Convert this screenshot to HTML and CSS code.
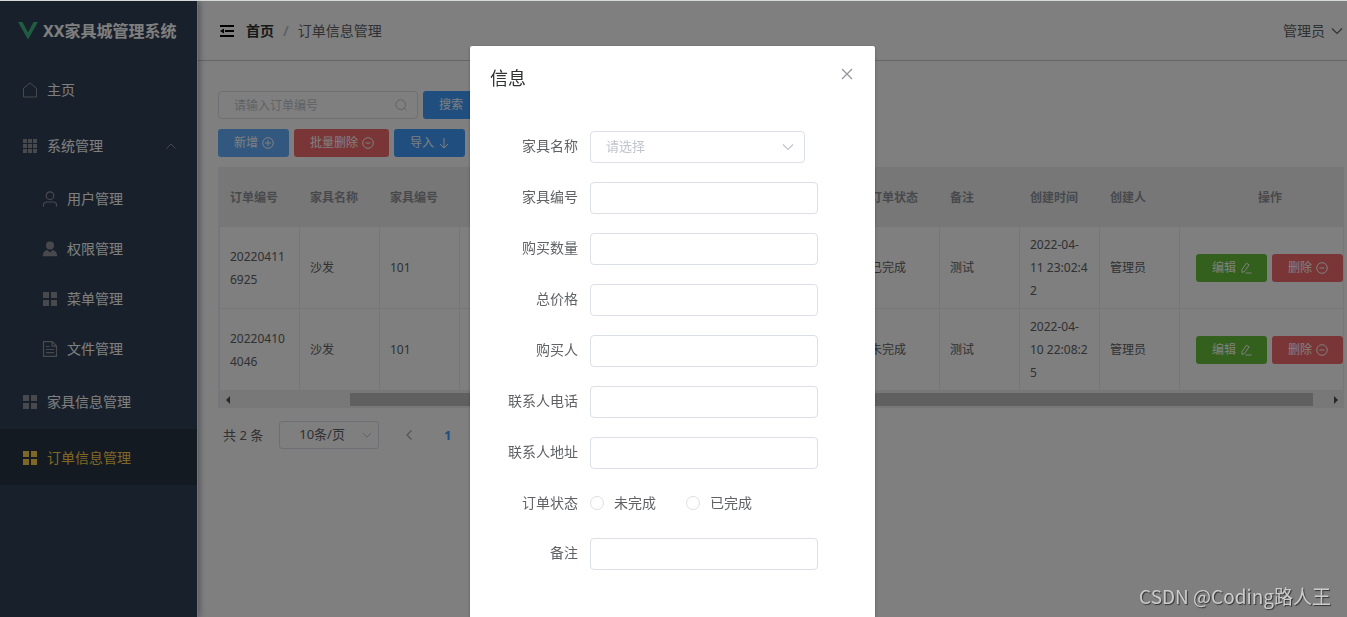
FILE: index.html
```html
<!DOCTYPE html>
<html lang="zh-CN">
<head>
<meta charset="utf-8">
<title>XX家具城管理系统</title>
<link rel="stylesheet" href="styles.css">
</head>
<body>
<svg class="sprite" aria-hidden="true">
  <symbol id="i-house" viewBox="0 0 16 16"><path d="M1.500 15V6.300L8 .9l6.500 5.400V15z" fill="none" stroke="currentColor"/></symbol>
  <symbol id="i-nine" viewBox="0 0 16 16"><path d="M1 1h4v4H1zM6 1h4v4H6zM11 1h4v4h-4zM1 6h4v4H1zM6 6h4v4H6zM11 6h4v4h-4zM1 11h4v4H1zM6 11h4v4H6zM11 11h4v4h-4z" fill="currentColor"/></symbol>
  <symbol id="i-menu" viewBox="0 0 16 16"><path d="M1 1h6v6H1zM9 1h6v6H9zM1 9h6v6H1zM9 9h6v6H9z" fill="currentColor"/></symbol>
  <symbol id="i-user" viewBox="0 0 16 16"><g fill="none" stroke="currentColor" stroke-width="1.200"><circle cx="8" cy="4.700" r="3.800"/><path d="M1.500 15.500v-1.500c0-2 1.500-3 3.500-3h6c2 0 3.500 1 3.500 3v1.500"/></g></symbol>
  <symbol id="i-user-solid" viewBox="0 0 16 16"><g fill="currentColor"><circle cx="8" cy="4.500" r="4"/><path d="M.8 15.300c0-3.500 1.500-5.700 4.500-6.300L8 11.500 10.700 9c3 .6 4.500 2.800 4.500 6.300z"/></g></symbol>
  <symbol id="i-doc" viewBox="0 0 16 16"><path d="M1.500.7h8.700l4.300 4.300v10.300h-13zM10 1v4.200h4.300M4 5.500h3.500M4 8.500h8M4 11.700h8" fill="none" stroke="currentColor" stroke-width="1.200"/></symbol>
  <symbol id="i-up" viewBox="0 0 12 12"><path d="M1.500 8.500 6 4l4.500 4.500" fill="none" stroke="currentColor"/></symbol>
  <symbol id="i-down" viewBox="0 0 12 12"><path d="M1 3.500l5 5 5-5" fill="none" stroke="currentColor" stroke-width="1.200"/></symbol>
  <symbol id="i-left" viewBox="0 0 12 12"><path d="M8.500 1.500 4 6l4.500 4.500" fill="none" stroke="currentColor" stroke-width="1.300"/></symbol>
  <symbol id="i-fold" viewBox="0 0 14 14"><path d="M0 1h14v2H0zM5 6h9v2H5zM0 11h14v2H0zM0 7l4-2.500v5z" fill="currentColor"/></symbol>
  <symbol id="i-search" viewBox="0 0 12 12"><path d="M9.300 9.300 11.500 11.500" stroke="currentColor"/><circle cx="5.700" cy="5.700" r="4.900" fill="none" stroke="currentColor"/></symbol>
  <symbol id="i-plus" viewBox="0 0 12 12"><circle cx="6" cy="6" r="5.300" fill="none" stroke="currentColor"/><path d="M3 6h6M6 3v6" stroke="currentColor"/></symbol>
  <symbol id="i-minus" viewBox="0 0 12 12"><circle cx="6" cy="6" r="5.300" fill="none" stroke="currentColor"/><path d="M3.500 6h5" stroke="currentColor"/></symbol>
  <symbol id="i-bottom" viewBox="0 0 12 12"><path d="M6 1v10M2 7l4 4 4-4" fill="none" stroke="currentColor"/></symbol>
  <symbol id="i-edit" viewBox="0 0 12 12"><path d="M2 7.500 6.500 1.200l2.600 1.700L4.700 9.300 2 10.500zM5.500 11H11.500" fill="none" stroke="currentColor"/></symbol>
  <symbol id="i-close" viewBox="0 0 12 12"><path d="M1 1l10 10M11 1 1 11" fill="none" stroke="currentColor" stroke-width="1.200"/></symbol>
</svg>

<div class="app">
  <aside class="sidebar">
    <div class="brand">
      <svg class="brand-logo" viewBox="0 0 20 18"><path d="M0 0h4.500L10 10.500 15.500 0H20L10 17.500z" fill="#41b883"/></svg>
      <span>XX家具城管理系统</span>
    </div>
    <nav class="menu">
      <a class="item" href="#"><svg class="mi"><use href="#i-house"/></svg>主页</a>
      <a class="item" href="#"><svg class="mi"><use href="#i-nine"/></svg>系统管理<svg class="caret"><use href="#i-up"/></svg></a>
      <a class="item sub" href="#"><svg class="mi"><use href="#i-user"/></svg>用户管理</a>
      <a class="item sub" href="#"><svg class="mi"><use href="#i-user-solid"/></svg>权限管理</a>
      <a class="item sub" href="#"><svg class="mi"><use href="#i-menu"/></svg>菜单管理</a>
      <a class="item sub" href="#"><svg class="mi"><use href="#i-doc"/></svg>文件管理</a>
      <a class="item" href="#"><svg class="mi"><use href="#i-menu"/></svg>家具信息管理</a>
      <a class="item active" href="#"><svg class="mi"><use href="#i-menu"/></svg>订单信息管理</a>
    </nav>
  </aside>

  <div class="page">
    <header class="topbar">
      <svg class="fold"><use href="#i-fold"/></svg>
      <nav class="crumbs"><a href="#">首页</a><b class="slash">/</b><span>订单信息管理</span></nav>
      <button class="account" type="button">管理员<svg class="ic"><use href="#i-down"/></svg></button>
    </header>
    <main class="main">
      <div class="bar">
        <div class="search"><input type="text" placeholder="请输入订单编号" aria-label="订单编号"><svg class="ic"><use href="#i-search"/></svg></div>
        <button class="btn primary" type="button">搜索</button>
      </div>
      <div class="bar">
        <button class="btn light" type="button">新增<svg class="ic"><use href="#i-plus"/></svg></button>
        <button class="btn danger" type="button">批量删除<svg class="ic"><use href="#i-minus"/></svg></button>
        <button class="btn primary" type="button">导入<svg class="ic"><use href="#i-bottom"/></svg></button>
      </div>
      <div class="table-box">
        <table class="table">
          <colgroup><col span="12" class="col"><col></colgroup>
          <thead>
            <tr><th>订单编号</th><th>家具名称</th><th>家具编号</th><th></th><th></th><th></th><th></th><th></th><th>订单状态</th><th>备注</th><th>创建时间</th><th>创建人</th><th class="ops">操作</th></tr>
          </thead>
          <tbody>
            <tr><td>202204116925</td><td>沙发</td><td>101</td><td></td><td></td><td></td><td></td><td></td><td>已完成</td><td>测试</td><td>2022-04-<br>11 23:02:4<br>2</td><td>管理员</td>
              <td class="ops"><div class="acts"><button class="btn success" type="button">编辑<svg class="ic"><use href="#i-edit"/></svg></button><button class="btn danger" type="button">删除<svg class="ic"><use href="#i-minus"/></svg></button></div></td></tr>
            <tr><td>202204104046</td><td>沙发</td><td>101</td><td></td><td></td><td></td><td></td><td></td><td>未完成</td><td>测试</td><td>2022-04-<br>10 22:08:2<br>5</td><td>管理员</td>
              <td class="ops"><div class="acts"><button class="btn success" type="button">编辑<svg class="ic"><use href="#i-edit"/></svg></button><button class="btn danger" type="button">删除<svg class="ic"><use href="#i-minus"/></svg></button></div></td></tr>
          </tbody>
        </table>
        <div class="scroll"><i class="arrow prev"></i><div class="track"><div class="thumb"></div></div><i class="arrow next"></i></div>
      </div>
      <div class="pager">
        <span>共 2 条</span>
        <div class="size"><select aria-label="每页条数"><option>10条/页</option></select><svg class="ic"><use href="#i-down"/></svg></div>
        <button class="pg" type="button" aria-label="上一页"><svg class="ic"><use href="#i-left"/></svg></button>
        <button class="pg current" type="button">1</button>
      </div>
    </main>
  </div>
</div>

<div class="overlay">
  <section class="dialog" role="dialog" aria-labelledby="dlg-title">
    <div class="dialog-head"><h2 id="dlg-title">信息</h2><button class="close" type="button" aria-label="关闭"><svg class="ic"><use href="#i-close"/></svg></button></div>
    <form class="form">
      <div class="row"><label for="f1">家具名称</label><div class="pick"><select id="f1"><option>请选择</option></select><svg class="ic"><use href="#i-down"/></svg></div></div>
      <div class="row"><label for="f2">家具编号</label><input class="field" id="f2" type="text"></div>
      <div class="row"><label for="f3">购买数量</label><input class="field" id="f3" type="text"></div>
      <div class="row"><label for="f4">总价格</label><input class="field" id="f4" type="text"></div>
      <div class="row"><label for="f5">购买人</label><input class="field" id="f5" type="text"></div>
      <div class="row"><label for="f6">联系人电话</label><input class="field" id="f6" type="text"></div>
      <div class="row"><label for="f7">联系人地址</label><input class="field" id="f7" type="text"></div>
      <div class="row" role="radiogroup" aria-labelledby="st"><span class="label" id="st">订单状态</span><label class="radio"><input type="radio" name="status">未完成</label><label class="radio"><input type="radio" name="status">已完成</label></div>
      <div class="row"><label for="f9">备注</label><input class="field" id="f9" type="text"></div>
    </form>
  </section>
</div>
<div class="watermark">CSDN @Coding路人王</div>
</body>
</html>
```

FILE: styles.css
```css
* { box-sizing: border-box; }
body {
  margin: 0;
  height: 100vh;
  overflow: hidden;
  border-top: 1px solid #d5dad9;
  background: #fff;
  color: #606266;
  font: 14px/20px "Noto Sans", "Noto Sans CJK SC", sans-serif;
}
.sprite { display: none; }
button, input, select { font: inherit; color: inherit; }
button { border: 0; padding: 0; background: none; }
a { color: inherit; text-decoration: none; }
.ic { width: 12px; height: 12px; flex: none; }

.app { display: flex; height: 100%; }
.sidebar {
  width: 198px;
  flex: none;
  background: #304156;
  border-right: 1px solid #e6e6e6;
  box-shadow: 2px 0 6px rgba(0, 21, 41, .35);
  z-index: 1;
  color: #fff;
}
.brand {
  display: flex;
  align-items: center;
  gap: 5px;
  height: 60px;
  padding-left: 18px;
  font-size: 16px;
  font-weight: bold;
  white-space: nowrap;
}
.brand-logo { width: 20px; height: 18px; flex: none; }
.item {
  display: flex;
  align-items: center;
  height: 56px;
  padding: 2px 20px 0 22px;
}
.sub { height: 50px; padding-left: 42px; }
.mi { width: 16px; height: 16px; margin-right: 9px; color: #909399; }
.caret { width: 12px; height: 12px; margin-left: auto; color: #909399; }
.active { background: #263445; color: #ffd04b; }
.active .mi { color: #ffd04b; }

.page { flex: 1; min-width: 0; }
.topbar {
  display: flex;
  align-items: center;
  gap: 12px;
  height: 60px;
  padding: 0 4px 0 22px;
  border-bottom: 1px solid #ccc;
}
.fold { width: 14px; height: 14px; color: #000; }
.crumbs { display: flex; }
.crumbs a { font-weight: bold; color: #303133; }
.slash { margin: 0 9px; color: #c0c4cc; }
.account { display: flex; align-items: center; gap: 6px; margin-left: auto; }

.main { padding: 30px 3px 0 20px; }
.bar { display: flex; gap: 5px; margin-bottom: 10px; }
.search { position: relative; width: 200px; }
.search input {
  width: 100%;
  height: 28px;
  padding: 0 30px 0 15px;
  border: 1px solid #dcdfe6;
  border-radius: 4px;
  background: #fff;
  font-size: 12px;
}
.search input::placeholder { color: #c0c4cc; }
.search .ic { position: absolute; right: 11px; top: 8px; color: #c0c4cc; }
.btn {
  display: inline-flex;
  align-items: center;
  gap: 4px;
  height: 28px;
  padding: 0 15px 0 16px;
  border-radius: 3px;
  color: #fff;
  font-size: 12px;
  white-space: nowrap;
}
.primary { background: #409eff; }
.light { background: #66b1ff; }
.danger { background: #f56c6c; }
.success { background: #67c23a; }

.table-box { border-left: 2px solid #ebeef5; }
.table {
  width: 100%;
  table-layout: fixed;
  border-collapse: separate;
  border-spacing: 0;
  font-size: 12px;
  line-height: 23px;
}
.col { width: 80px; }
.table th, .table td {
  padding: 0 10px;
  text-align: left;
  word-break: break-all;
}
.table th { height: 60px; background: #eee; color: #909399; }
.table td {
  height: 82px;
  border-right: 1px solid #ebeef5;
  border-bottom: 1px solid #ebeef5;
}
.table .ops { padding: 0 0 0 16px; text-align: center; }
.acts { display: flex; justify-content: flex-end; gap: 5px; }
.scroll { display: flex; align-items: center; height: 17px; background: #f1f1f1; }
.arrow { width: 16px; display: flex; justify-content: center; }
.arrow::after { content: ""; border: 4px solid transparent; }
.prev::after { border-right-color: #505050; border-left: 0; }
.next::after { border-left-color: #505050; border-right: 0; }
.track { flex: 1; padding: 0 15px 0 114px; }
.thumb { height: 13px; background: #c1c1c1; }

.pager { display: flex; align-items: center; margin-top: 13px; padding-left: 5px; font-size: 13px; }
.size { position: relative; width: 100px; margin: 0 16px; }
.size select {
  appearance: none;
  width: 100%;
  height: 28px;
  padding: 0 25px 2px 19px;
  border: 1px solid #dcdfe6;
  border-radius: 3px;
  background: #fff;
}
.size .ic { position: absolute; right: 7px; top: 8px; width: 10px; color: #c0c4cc; }
.pg { display: flex; justify-content: center; width: 27px; margin-right: 12px; color: #a8abb2; }
.current { color: #409eff; font-weight: bold; }

.overlay {
  position: fixed;
  inset: 1px 0 0;
  z-index: 2;
  padding: 45px 2px 0 0;
  overflow: hidden;
  background: rgba(0, 0, 0, .5);
}
.dialog {
  width: 405px;
  min-height: 100%;
  margin: 0 auto;
  border-radius: 2px;
  background: #fff;
  box-shadow: 0 1px 3px rgba(0, 0, 0, .3);
}
.dialog-head {
  display: flex;
  justify-content: space-between;
  align-items: flex-start;
  padding: 20px 22px 0 20px;
}
.dialog-head h2 { margin: 0; color: #303133; font-size: 18px; font-weight: normal; line-height: 24px; }
.close { padding-top: 2px; color: #909399; line-height: 0; }
.form { display: flex; flex-direction: column; gap: 19px; padding: 41px 57px 50px 20px; }
.row { display: grid; grid-template-columns: 88px 1fr; column-gap: 12px; align-items: center; min-height: 32px; }
.row > label:first-child, .label { padding-bottom: 2px; text-align: right; white-space: nowrap; }
.row[role="radiogroup"] { display: flex; gap: 0; min-height: 31px; }
.label { width: 88px; margin-right: 12px; }
.field, .pick select {
  width: 100%;
  height: 32px;
  padding: 0 15px;
  border: 1px solid #dcdfe6;
  border-radius: 4px;
  background: #fff;
}
.pick { position: relative; margin-right: 13px; }
.pick select { appearance: none; padding-bottom: 2px; color: #c0c4cc; font-size: 13px; }
.pick .ic { position: absolute; right: 11px; top: 10px; color: #c0c4cc; }
.radio { display: flex; align-items: center; gap: 10px; margin-right: 30px; padding-bottom: 2px; white-space: nowrap; }
.radio input { appearance: none; width: 14px; height: 14px; margin: 0; border: 1px solid #dcdfe6; border-radius: 50%; background: #fff; }

.watermark {
  position: fixed;
  right: 16px;
  bottom: 6px;
  z-index: 3;
  color: #ccc;
  font: 19px/30px "Noto Sans CJK SC", sans-serif;
  text-shadow: 1px 1px 1px rgba(0, 0, 0, .6);
}
```
